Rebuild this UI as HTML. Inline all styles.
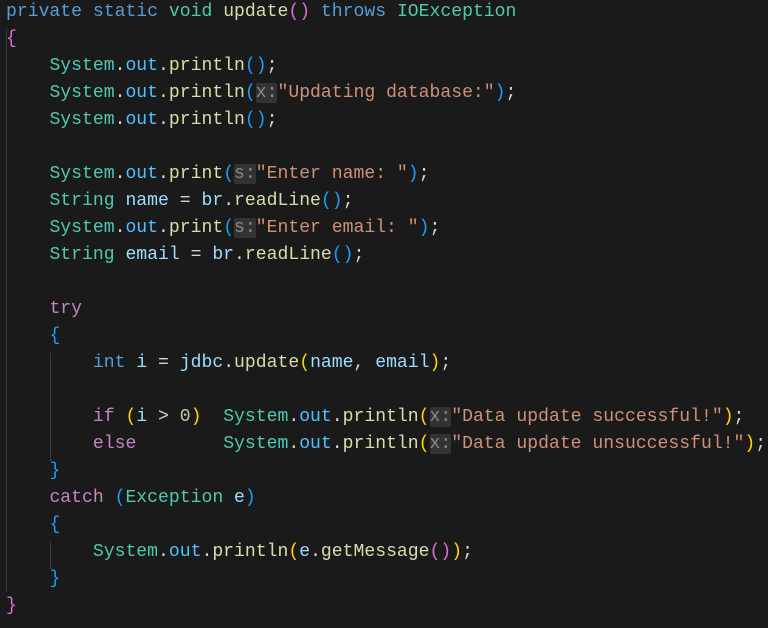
<!DOCTYPE html>
<html><head><style>
html,body{margin:0;padding:0;background:#1a1a1a;width:768px;height:628px;overflow:hidden}
pre{margin:0;position:absolute;left:6px;top:-1px;font-family:"Liberation Mono",monospace;font-size:18.1px;line-height:27px;color:#d4d4d4}
.k{color:#569cd6}.t{color:#4ec9b0}.f{color:#dcdcaa}.c{color:#c586c0}.o{color:#4fc1ff}.v{color:#9cdcfe}.s{color:#ce9178}.n{color:#b5cea8}
.p{color:#da70d6}.b{color:#179fff}.g{color:#ffd700}
.h{color:#8a8a8a;background:#333333;border-radius:2px}
.gd{position:absolute;width:1px;background:#3a3a3a}
</style></head><body>
<div class="gd" style="left:6px;top:29px;height:563px"></div>
<div class="gd" style="left:50px;top:353px;height:108px"></div>
<div class="gd" style="left:50px;top:542px;height:27px"></div>
<pre><span class="k">private</span> <span class="k">static</span> <span class="t">void</span> <span class="f">update</span><span class="p">()</span> <span class="k">throws</span> <span class="t">IOException</span>
<span class="p">{</span>
    <span class="t">System</span>.<span class="o">out</span>.<span class="f">println</span><span class="b">()</span>;
    <span class="t">System</span>.<span class="o">out</span>.<span class="f">println</span><span class="b">(</span><span class="h">x:</span><span class="s">"Updating database:"</span><span class="b">)</span>;
    <span class="t">System</span>.<span class="o">out</span>.<span class="f">println</span><span class="b">()</span>;

    <span class="t">System</span>.<span class="o">out</span>.<span class="f">print</span><span class="b">(</span><span class="h">s:</span><span class="s">"Enter name: "</span><span class="b">)</span>;
    <span class="t">String</span> <span class="v">name</span> = <span class="v">br</span>.<span class="f">readLine</span><span class="b">()</span>;
    <span class="t">System</span>.<span class="o">out</span>.<span class="f">print</span><span class="b">(</span><span class="h">s:</span><span class="s">"Enter email: "</span><span class="b">)</span>;
    <span class="t">String</span> <span class="v">email</span> = <span class="v">br</span>.<span class="f">readLine</span><span class="b">()</span>;

    <span class="c">try</span>
    <span class="b">{</span>
        <span class="k">int</span> <span class="v">i</span> = <span class="v">jdbc</span>.<span class="f">update</span><span class="g">(</span><span class="v">name</span>, <span class="v">email</span><span class="g">)</span>;

        <span class="c">if</span> <span class="g">(</span><span class="v">i</span> &gt; <span class="n">0</span><span class="g">)</span>  <span class="t">System</span>.<span class="o">out</span>.<span class="f">println</span><span class="g">(</span><span class="h">x:</span><span class="s">"Data update successful!"</span><span class="g">)</span>;
        <span class="c">else</span>        <span class="t">System</span>.<span class="o">out</span>.<span class="f">println</span><span class="g">(</span><span class="h">x:</span><span class="s">"Data update unsuccessful!"</span><span class="g">)</span>;
    <span class="b">}</span>
    <span class="c">catch</span> <span class="b">(</span><span class="t">Exception</span> <span class="v">e</span><span class="b">)</span>
    <span class="b">{</span>
        <span class="t">System</span>.<span class="o">out</span>.<span class="f">println</span><span class="g">(</span><span class="v">e</span>.<span class="f">getMessage</span><span class="p">()</span><span class="g">)</span>;
    <span class="b">}</span>
<span class="p">}</span></pre>
</body></html>
